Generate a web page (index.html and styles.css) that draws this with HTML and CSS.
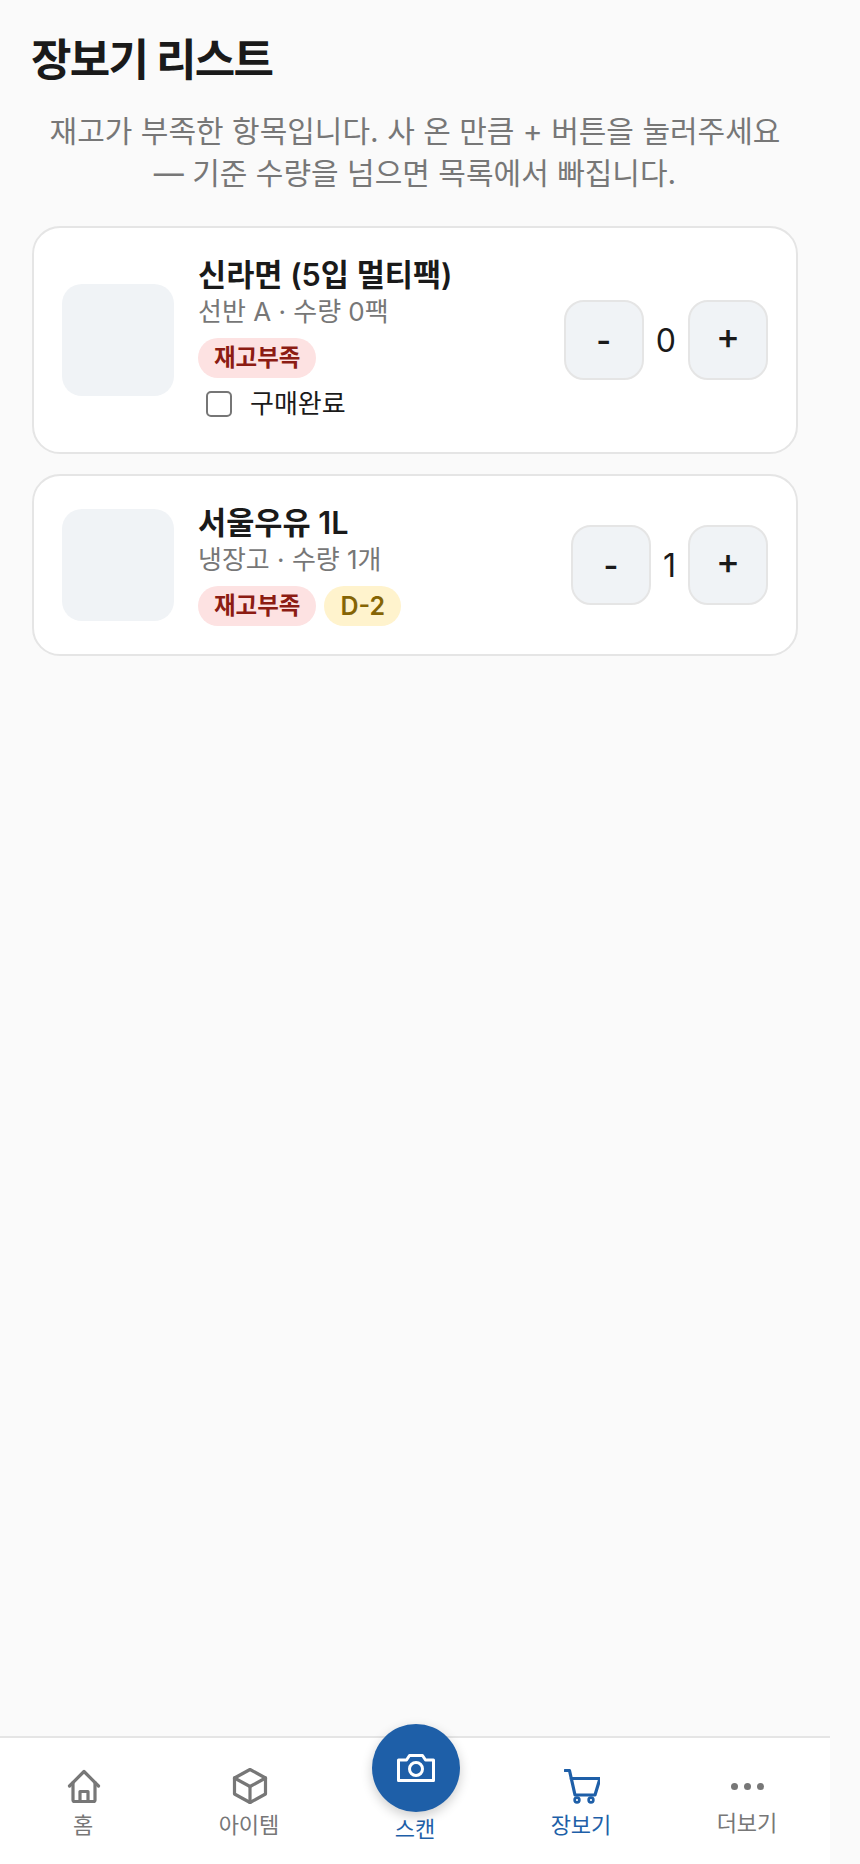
FILE: index.html
```html
<!DOCTYPE html>
<html lang="ko">
<head>
    <meta charset="UTF-8">
    <meta name="viewport" content="width=device-width, initial-scale=1.0">
    <title>장보기 리스트</title>
    <link rel="stylesheet" href="styles.css">
</head>
<body>
    <div class="page">
        <main class="content">
            <h1 class="title">장보기 리스트</h1>
            <p class="desc">재고가 부족한 항목입니다. 사 온 만큼 + 버튼을 눌러주세요<br>— 기준 수량을 넘으면 목록에서 빠집니다.</p>

            <div class="card">
                <div class="thumb"></div>
                <div class="info">
                    <div class="name">신라면 (5입 멀티팩)</div>
                    <div class="meta">선반 A · 수량 0팩</div>
                    <div class="tags">
                        <span class="tag tag-low">재고부족</span>
                    </div>
                    <label class="check">
                        <span class="box"></span>
                        <span>구매완료</span>
                    </label>
                </div>
                <div class="stepper">
                    <button type="button" class="step minus">-</button>
                    <span class="count">0</span>
                    <button type="button" class="step plus">+</button>
                </div>
            </div>

            <div class="card">
                <div class="thumb"></div>
                <div class="info">
                    <div class="name">서울우유 1L</div>
                    <div class="meta">냉장고 · 수량 1개</div>
                    <div class="tags">
                        <span class="tag tag-low">재고부족</span>
                        <span class="tag tag-date">D-2</span>
                    </div>
                </div>
                <div class="stepper">
                    <button type="button" class="step minus">-</button>
                    <span class="count">1</span>
                    <button type="button" class="step plus">+</button>
                </div>
            </div>
        </main>

        <nav class="tabbar">
            <a class="tab">
                <svg class="icon" viewBox="0 0 36 36" fill="none" stroke="currentColor" stroke-width="3.2" stroke-linecap="round" stroke-linejoin="round">
                    <path d="M3.500 18 18 3.500 32.500 18"/>
                    <path d="M7 14.500V32a1.500 1.500 0 0 0 1.500 1.500h19a1.500 1.500 0 0 0 1.500-1.500V14.500"/>
                    <path d="M14 33.500V23.500h8v10"/>
                </svg>
                <span>홈</span>
            </a>
            <a class="tab">
                <svg class="icon" viewBox="0 0 36 36" fill="none" stroke="currentColor" stroke-width="3.2" stroke-linecap="round" stroke-linejoin="round">
                    <path d="M18 1.500 33.500 10v16L18 34.500 2.500 26V10z"/>
                    <path d="M2.500 10 18 18.500 33.500 10"/>
                    <path d="M18 18.500v16"/>
                </svg>
                <span>아이템</span>
            </a>
            <a class="tab tab-scan">
                <span class="fab">
                    <svg class="fab-icon" viewBox="0 0 38 28" fill="none" stroke="currentColor" stroke-width="3" stroke-linejoin="round">
                        <path d="M1.500 6h8l3-4.500h13l3 4.500h8v20.500h-35z"/>
                        <circle cx="19" cy="15" r="6.500"/>
                    </svg>
                </span>
                <span>스캔</span>
            </a>
            <a class="tab active">
                <svg class="icon" viewBox="0 0 36 36" fill="none" stroke="currentColor" stroke-width="3.2" stroke-linecap="round" stroke-linejoin="round">
                    <path d="M1 2.500h4.500L11 27h20l5-16.500H7"/>
                    <circle cx="13" cy="32" r="2.400" stroke-width="2.600"/>
                    <circle cx="27" cy="32" r="2.400" stroke-width="2.600"/>
                </svg>
                <span>장보기</span>
            </a>
            <a class="tab">
                <span class="dots"><i></i><i></i><i></i></span>
                <span>더보기</span>
            </a>
        </nav>
    </div>
</body>
</html>
```

FILE: styles.css
```css
* {
    box-sizing: border-box;
}
html, body {
    margin: 0;
    background-color: #fafafa;
}
body {
    font-family: Inter, "Noto Sans CJK KR", sans-serif;
    color: #1a1a1a;
}
.page {
    width: 830px;
    height: 1864px;
    display: flex;
    flex-direction: column;
}
.content {
    flex: 1;
    padding: 34px 32px 0;
}
.title {
    margin: 0 0 0 -1px;
    font-size: 44px;
    line-height: 52px;
    font-weight: 700;
    letter-spacing: -1.7px;
}
.desc {
    margin: 25px 0 32px;
    font-size: 30px;
    line-height: 41.5px;
    color: #777;
    text-align: center;
}
.card {
    display: flex;
    align-items: center;
    gap: 24px;
    padding: 28px;
    margin-bottom: 20px;
    background-color: #fff;
    border: 2px solid #e5e5e5;
    border-radius: 28px;
}
.thumb {
    width: 112px;
    height: 112px;
    flex-shrink: 0;
    background-color: #f0f3f6;
    border-radius: 20px;
}
.info {
    flex: 1;
    min-width: 0;
}
.name {
    font-size: 30.6px;
    line-height: 38px;
    font-weight: 600;
}
.meta {
    font-size: 26px;
    line-height: 36px;
    color: #777;
}
.tags {
    display: flex;
    gap: 8px;
    margin-top: 8px;
}
.tag {
    padding: 0 16px;
    height: 40px;
    line-height: 40px;
    font-size: 23.5px;
    font-weight: 600;
    border-radius: 20px;
}
.tag-low {
    background-color: #fde2e2;
    color: #8c1c13;
}
.tag-date {
    font-size: 25px;
    background-color: #fff3cd;
    color: #856404;
}
.check {
    display: flex;
    align-items: center;
    gap: 18px;
    margin: 6px 0 0 8px;
    font-size: 26px;
    line-height: 40px;
}
.box {
    width: 26px;
    height: 26px;
    border: 2px solid #767676;
    border-radius: 5px;
    background-color: #fff;
}
.stepper {
    display: flex;
    align-items: center;
    gap: 12px;
}
.step {
    width: 80px;
    height: 80px;
    padding: 0;
    font-family: inherit;
    font-weight: 600;
    color: #1a1a1a;
    background-color: #f0f3f6;
    border: 2px solid #e5e5e5;
    border-radius: 20px;
}
.minus {
    font-size: 32px;
}
.plus {
    padding-bottom: 8px;
    font-size: 36px;
    font-weight: 500;
}
.count {
    font-size: 32px;
}
.tabbar {
    height: 128px;
    display: flex;
    background-color: #fff;
    border-top: 2px solid #e5e5e5;
}
.tab {
    position: relative;
    flex: 1;
    display: flex;
    flex-direction: column;
    align-items: center;
    padding-top: 30px;
    font-size: 22px;
    line-height: 30px;
    color: #777;
}
.icon {
    width: 36px;
    height: 36px;
    margin: 0 0 6px 2px;
}
.active {
    color: #1e5fa8;
}
.tab-scan {
    color: #1e5fa8;
    padding-top: 76px;
}
.fab {
    position: absolute;
    top: -14px;
    left: 40px;
    width: 88px;
    height: 88px;
    display: flex;
    align-items: center;
    justify-content: center;
    color: #fff;
    background-color: #1e5fa8;
    border-radius: 50%;
    box-shadow: 0 4px 12px rgba(0, 0, 0, 0.2);
}
.fab-icon {
    width: 38px;
    height: 28px;
}
.dots {
    display: flex;
    gap: 6px;
    height: 36px;
    align-items: center;
    margin-bottom: 4px;
}
.dots i {
    width: 7px;
    height: 7px;
    background-color: #777;
    border-radius: 50%;
}
```
